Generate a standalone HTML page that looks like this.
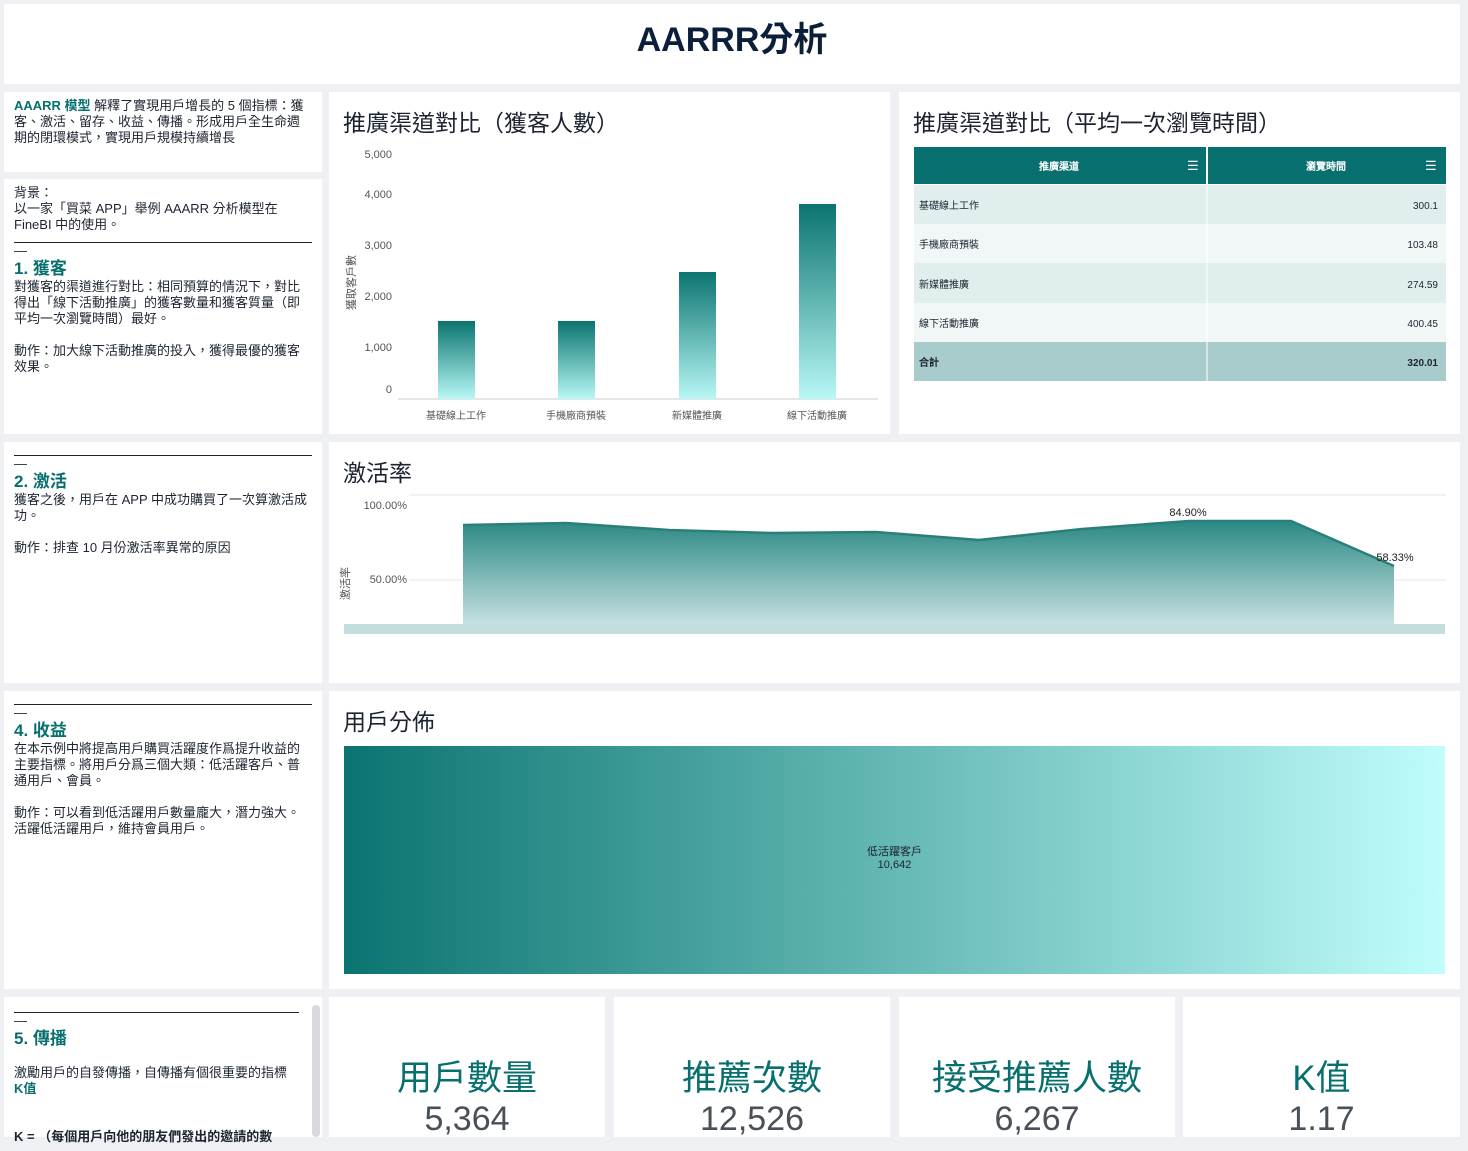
<!DOCTYPE html>
<html><head><meta charset="utf-8"><style>
*{margin:0;padding:0;box-sizing:border-box}
body{width:1468px;height:1134px;background:#eef0f4;position:relative;overflow:hidden;font-family:"Liberation Sans","Noto Sans CJK TC",sans-serif;color:#1d2430}
.c{position:absolute;background:#fff}
.t{position:absolute;font-size:23px;color:#1d2430}
.lt{font-size:13px;line-height:16px;padding:6px 10px;color:#1d2430}
.g{color:#07706e;font-weight:bold}
.h{color:#07706e;font-weight:bold;font-size:17px;line-height:20px}
.k{position:absolute;width:100%;text-align:center;color:#07706e;font-size:35px;top:62px;line-height:40px}
.v{position:absolute;width:100%;text-align:center;color:#4a5058;font-size:34px;top:102px;line-height:40px}
</style></head><body>
<div class="c" style="left:4px;top:4px;width:1456px;height:80px"><div style="text-align:center;font-size:34px;font-weight:bold;color:#0b1f3a;margin-top:8px">AARRR分析</div></div>

<div class="c" style="left:4px;top:92px;width:318px;height:80px"><div class="lt"><span class="g">AAARR 模型</span> 解釋了實現用戶增長的 5 個指標：獲客、激活、留存、收益、傳播。形成用戶全生命週期的閉環模式，實現用戶規模持續增長</div></div>
<div class="c" style="left:4px;top:179px;width:318px;height:255px"><div class="lt">背景：<br>以一家「買菜 APP」舉例 AAARR 分析模型在 FineBI 中的使用。<br><div style="border-bottom:1px solid #1d2430;height:10px;width:298px"></div>—<br><span class="h">1. 獲客</span><br>對獲客的渠道進行對比：相同預算的情況下，對比得出「線下活動推廣」的獲客數量和獲客質量（即平均一次瀏覽時間）最好。<br><br>動作：加大線下活動推廣的投入，獲得最優的獲客效果。</div></div>
<div class="c" style="left:4px;top:442px;width:318px;height:241px"><div class="lt"><div style="border-bottom:1px solid #1d2430;height:8px;width:298px"></div>—<br><span class="h">2. 激活</span><br>獲客之後，用戶在 APP 中成功購買了一次算激活成功。<br><br>動作：排查 10 月份激活率異常的原因</div></div>
<div class="c" style="left:4px;top:691px;width:318px;height:298px"><div class="lt"><div style="border-bottom:1px solid #1d2430;height:8px;width:298px"></div>—<br><span class="h">4. 收益</span><br>在本示例中將提高用戶購買活躍度作爲提升收益的主要指標。將用戶分爲三個大類：低活躍客戶、普通用戶、會員。<br><br>動作：可以看到低活躍用戶數量龐大，潛力強大。活躍低活躍用戶，維持會員用戶。</div></div>
<div class="c" style="left:4px;top:997px;width:318px;height:140px"><div class="lt"><div style="border-bottom:1px solid #1d2430;height:10px;width:285px"></div>—<br><span class="h">5. 傳播</span><br><br>激勵用戶的自發傳播，自傳播有個很重要的指標<br><span class="g" style="font-weight:bold">K值</span><br><br><br><b>K = （每個用戶向他的朋友們發出的邀請的數</b></div>
<div style="position:absolute;left:308px;top:8px;width:8px;height:132px;background:#d8dade;border-radius:4px"></div></div>

<div class="c" style="left:329px;top:92px;width:561px;height:342px">
<div class="t" style="left:14px;top:12px">推廣渠道對比（獲客人數）</div>
<svg width="561" height="342" style="position:absolute;left:0;top:0" font-family="Liberation Sans" font-size="11" fill="#555">
<defs><linearGradient id="b" x1="0" y1="0" x2="0" y2="1"><stop offset="0" stop-color="#0b7470"/><stop offset="1" stop-color="#b8f8f6"/></linearGradient></defs>
<g text-anchor="end"><text x="63" y="66">5,000</text><text x="63" y="106">4,000</text><text x="63" y="157">3,000</text><text x="63" y="208">2,000</text><text x="63" y="259">1,000</text><text x="63" y="301">0</text></g>
<text transform="translate(26,218) rotate(-90)" font-size="11">獲取客戶數</text>
<line x1="69" y1="307" x2="549" y2="307" stroke="#ccc"/>
<rect x="109" y="229" width="37" height="78" fill="url(#b)"/>
<rect x="229" y="229" width="37" height="78" fill="url(#b)"/>
<rect x="350" y="180" width="37" height="127" fill="url(#b)"/>
<rect x="470" y="112" width="37" height="195" fill="url(#b)"/>
<g text-anchor="middle" font-size="10"><text x="127" y="327">基礎線上工作</text><text x="247" y="327">手機廠商預裝</text><text x="368" y="327">新媒體推廣</text><text x="488" y="327">線下活動推廣</text></g>
</svg></div>

<div class="c" style="left:899px;top:92px;width:561px;height:342px">
<div class="t" style="left:14px;top:12px">推廣渠道對比（平均一次瀏覽時間）</div>
<svg width="561" height="342" style="position:absolute;left:0;top:0" font-family="Liberation Sans" font-size="10" fill="#1d2430">
<rect x="15" y="55" width="532" height="37" fill="#07706e"/><line x1="308" y1="55" x2="308" y2="92" stroke="#fff" stroke-width="2"/>
<text x="160" y="78" fill="#fff" text-anchor="middle" font-weight="bold">推廣渠道</text><text x="427" y="78" fill="#fff" text-anchor="middle" font-weight="bold">瀏覽時間</text>
<text x="288" y="78" fill="#fff" font-size="13">☰</text><text x="526" y="78" fill="#fff" font-size="13">☰</text>
<rect x="15" y="93" width="532" height="39" fill="#e0efee"/><rect x="15" y="132" width="532" height="39" fill="#f0f7f6"/>
<rect x="15" y="171" width="532" height="40" fill="#e0efee"/><rect x="15" y="211" width="532" height="39" fill="#f0f7f6"/>
<rect x="15" y="250" width="532" height="39" fill="#a8cccb"/>
<line x1="308" y1="93" x2="308" y2="289" stroke="#fff"/>
<text x="20" y="117">基礎線上工作</text><text x="539" y="117" text-anchor="end">300.1</text>
<text x="20" y="156">手機廠商預裝</text><text x="539" y="156" text-anchor="end">103.48</text>
<text x="20" y="196">新媒體推廣</text><text x="539" y="196" text-anchor="end">274.59</text>
<text x="20" y="235">線下活動推廣</text><text x="539" y="235" text-anchor="end">400.45</text>
<text x="20" y="274" font-weight="bold">合計</text><text x="539" y="274" text-anchor="end" font-weight="bold">320.01</text>
</svg></div>

<div class="c" style="left:329px;top:442px;width:1131px;height:241px">
<div class="t" style="left:14px;top:12px">激活率</div>
<svg width="1131" height="241" style="position:absolute;left:0;top:0" font-family="Liberation Sans" font-size="11" fill="#555">
<defs><linearGradient id="a" x1="0" y1="0" x2="0" y2="1"><stop offset="0" stop-color="#2a8883"/><stop offset="1" stop-color="#c6e1e1"/></linearGradient></defs>
<line x1="80" y1="53" x2="1117" y2="53" stroke="#e4e4e4"/><line x1="80" y1="138" x2="1117" y2="138" stroke="#e4e4e4"/>
<text x="78" y="67" text-anchor="end">100.00%</text><text x="78" y="141" text-anchor="end">50.00%</text>
<text transform="translate(20,158) rotate(-90)" font-size="11">激活率</text>
<rect x="15" y="182" width="1101" height="10" fill="#c3dedd"/>
<path d="M134,83 L237,81 L340,88 L443,91 L547,90 L650,98 L753,87 L860,79 L962,79 L1065,124 L1065,182 L134,182Z" fill="url(#a)"/>
<path d="M134,83 L237,81 L340,88 L443,91 L547,90 L650,98 L753,87 L860,79 L962,79 L1065,124" fill="none" stroke="#2a7f7b" stroke-width="2.5"/>
<text x="859" y="74" text-anchor="middle" fill="#222">84.90%</text><text x="1066" y="119" text-anchor="middle" fill="#222">58.33%</text>
</svg></div>

<div class="c" style="left:329px;top:691px;width:1131px;height:298px">
<div class="t" style="left:14px;top:12px">用戶分佈</div>
<div style="position:absolute;left:15px;top:55px;width:1101px;height:228px;background:linear-gradient(90deg,#0b7470,#c0fdfb)"></div>
<div style="position:absolute;left:15px;top:155px;width:1101px;text-align:center;font-size:11px;line-height:13px;color:#1d2430">低活躍客戶<br>10,642</div>
</div>

<div class="c" style="left:329px;top:997px;width:276px;height:140px"><div class="k">用戶數量</div><div class="v">5,364</div></div>
<div class="c" style="left:614px;top:997px;width:276px;height:140px"><div class="k">推薦次數</div><div class="v">12,526</div></div>
<div class="c" style="left:899px;top:997px;width:276px;height:140px"><div class="k">接受推薦人數</div><div class="v">6,267</div></div>
<div class="c" style="left:1183px;top:997px;width:277px;height:140px"><div class="k">K值</div><div class="v">1.17</div></div>
</body></html>
